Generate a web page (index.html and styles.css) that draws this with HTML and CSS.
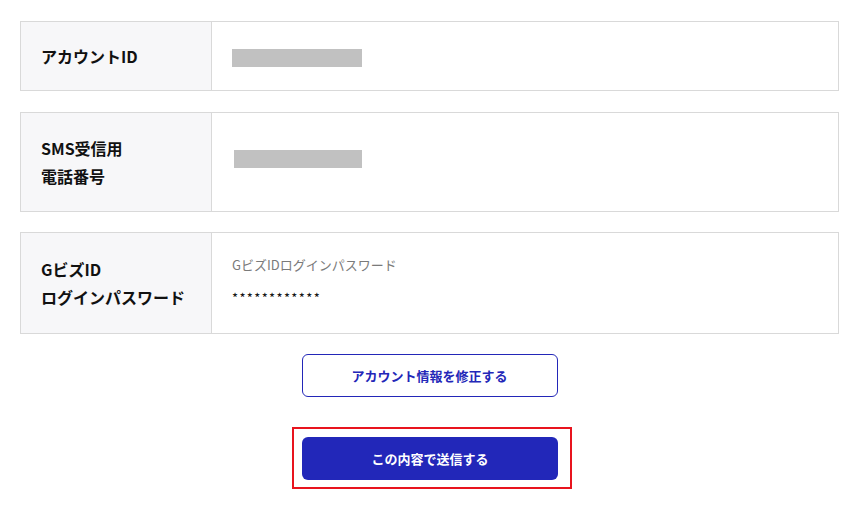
FILE: index.html
```html
<!DOCTYPE html>
<html lang="ja">
<head>
<meta charset="utf-8">
<link rel="stylesheet" href="styles.css">
</head>
<body>
<main class="page">
  <div class="row row-1">
    <div class="label">アカウントID</div>
    <div class="value"><span class="mask"></span></div>
  </div>
  <div class="row row-2">
    <div class="label label-2">SMS受信用<br>電話番号</div>
    <div class="value"><span class="mask mask-2"></span></div>
  </div>
  <div class="row row-3">
    <div class="label">GビズID<br>ログインパスワード</div>
    <div class="value value-pw">
      <div class="sub">GビズIDログインパスワード</div>
      <div class="stars">************</div>
    </div>
  </div>
  <div class="actions">
    <button class="btn btn-outline" type="button">アカウント情報を修正する</button>
    <div class="highlight">
      <button class="btn btn-primary" type="button">この内容で送信する</button>
    </div>
  </div>
</main>
</body>
</html>
```

FILE: styles.css
```css
* { box-sizing: border-box; }
html, body { margin: 0; padding: 0; background: #fff; }
body {
  font-family: "Noto Sans CJK JP", "Noto Sans", sans-serif;
  color: #111;
}
.page {
  padding: 21px 25px 0 20px;
  display: flex;
  flex-direction: column;
  gap: 20px;
}
.row {
  display: flex;
  border: 1px solid #d9d9d9;
}
.row-2 { margin-top: 1px; }
.label {
  width: 191px;
  flex: none;
  background: #f7f7f9;
  border-right: 1px solid #d9d9d9;
  padding: 20px 20px;
  font-size: 16px;
  font-weight: 700;
  line-height: 28px;
  display: flex;
  flex-direction: column;
  justify-content: center;
}
.label-2 { padding: 21px 20px; }
.value {
  flex: 1;
  padding: 20px 20px;
  display: flex;
  flex-direction: column;
  justify-content: center;
}
.value-pw {
  justify-content: flex-start;
  padding: 22px 20px 25px;
}
.mask {
  display: block;
  width: 130px;
  height: 18px;
  background: #c1c1c1;
  margin-top: 4px;
}
.mask-2 {
  width: 128px;
  margin-left: 2px;
  margin-top: -6px;
}
.sub {
  font-size: 13px;
  line-height: 20px;
  color: #7a7a7a;
}
.stars {
  font-size: 13px;
  line-height: 20px;
  margin-top: 13px;
  letter-spacing: 1.35px;
  color: #111;
}
.actions {
  display: flex;
  flex-direction: column;
  align-items: center;
}
.btn {
  width: 256px;
  height: 43px;
  border-radius: 6px;
  font-family: "Noto Sans CJK JP", "Noto Sans", sans-serif;
  font-size: 13px;
  font-weight: 700;
  cursor: pointer;
}
.btn-outline {
  background: #fff;
  border: 1px solid #2327b8;
  color: #2327b8;
}
.highlight {
  margin-top: 30px;
  border: 2px solid #e8141e;
  padding: 8px 12px 7px 8px;
  margin-left: 5px;
}
.btn-primary {
  display: block;
  background: #2227b9;
  border: none;
  color: #fff;
}
```
